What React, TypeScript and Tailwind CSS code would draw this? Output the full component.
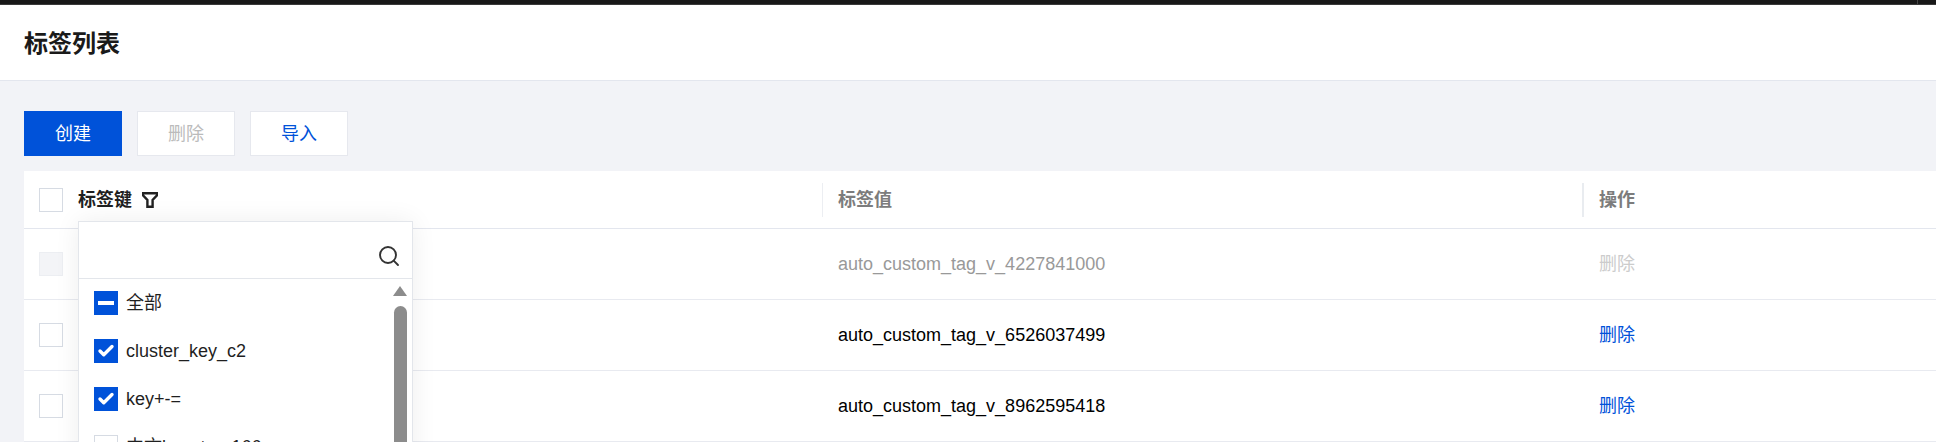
import { Check, Search } from 'lucide-react'

const font = { fontFamily: '"Liberation Sans", "Noto Sans CJK SC", sans-serif' }

const rows = [
  { value: 'auto_custom_tag_v_4227841000', disabled: true },
  { value: 'auto_custom_tag_v_6526037499', disabled: false },
  { value: 'auto_custom_tag_v_8962595418', disabled: false },
]

function FilterIcon() {
  return (
    <svg width="16" height="16" viewBox="0 0 16 16" fill="none" stroke="#222" strokeWidth="2.4">
      <path d="M1 1.2h14v2.2L10.6 8v6.8H5.4V8L1 3.4z" />
    </svg>
  )
}

function Box({ state }: { state?: 'all' | 'some' | 'disabled' }) {
  if (state === 'all') {
    return (
      <span className="flex h-6 w-6 shrink-0 items-center justify-center bg-[#0052d9]">
        <Check size={18} strokeWidth={4.5} className="text-white" />
      </span>
    )
  }
  if (state === 'some') {
    return (
      <span className="flex h-6 w-6 shrink-0 items-center justify-center bg-[#0052d9]">
        <span className="h-[4px] w-[16px] bg-white" />
      </span>
    )
  }
  if (state === 'disabled') {
    return <span className="block h-6 w-6 shrink-0 border border-[#eceef2] bg-[#f3f4f7]" />
  }
  return <span className="block h-6 w-6 shrink-0 border border-[#d6dbe3] bg-white" />
}

function FilterMenu() {
  return (
    <div className="absolute left-[54px] top-[50px] z-10 h-[400px] w-[335px] border border-[#e3e6eb] bg-white shadow-[0_0_24px_rgba(0,0,0,0.07)]">
      <div className="flex h-[57px] items-end justify-end border-b border-[#e3e6eb] pb-[10px] pr-[11px]">
        <Search size={24} strokeWidth={1.9} className="text-[#333]" />
      </div>
      <div className="relative">
        <div className="flex flex-col gap-[24px] pl-[15px] pt-[12px] text-[18px] text-[#1f1f1f]">
          <div className="flex h-6 items-center gap-2">
            <Box state="some" />
            <span>全部</span>
          </div>
          <div className="flex h-6 items-center gap-2">
            <Box state="all" />
            <span>cluster_key_c2</span>
          </div>
          <div className="flex h-6 items-center gap-2">
            <Box state="all" />
            <span>key+-=</span>
          </div>
          <div className="flex h-6 items-center gap-2">
            <Box />
            <span>中文key+tag-166</span>
          </div>
        </div>
        <div className="absolute right-[5px] top-[7px] h-0 w-0 border-x-[7px] border-b-[10px] border-x-transparent border-b-[#8c8c8c]" />
        <div className="absolute right-[5px] top-[27px] h-[300px] w-[13px] rounded-t-[7px] bg-[#8c8c8c]" />
      </div>
    </div>
  )
}

export default function App() {
  return (
    <div className="h-[442px] overflow-hidden bg-[#f2f3f7] text-[18px]" style={font}>
      <div className="flex h-[5px] border-b border-[#3a3a3a] bg-[#181818]">
        <div className="w-[1918px] border-r border-[#444]" />
      </div>
      <div className="flex h-[76px] items-center border-b border-[#e3e6ee] bg-white pl-6 pt-[2px]">
        <h1 className="text-[24px] font-bold text-[#1a1a1a]">标签列表</h1>
      </div>
      <div className="pl-6 pt-[30px]">
        <div className="flex gap-[15px]">
          <button className="h-[45px] w-[98px] bg-[#0052d9] pt-[2px] text-[18px] text-white">创建</button>
          <button className="h-[45px] w-[98px] border border-[#e6e8ee] bg-white pt-[2px] text-[18px] text-[#bbb]">删除</button>
          <button className="h-[45px] w-[98px] border border-[#e6e8ee] bg-white pt-[2px] text-[18px] text-[#0052d9]">导入</button>
        </div>
        <div className="relative mt-[15px] bg-white">
          <div className="flex h-[58px] items-center border-b border-[#e3e6ee] text-[18px] font-bold">
            <div className="flex w-[798px] items-center pl-[15px]">
              <Box />
              <span className="ml-[15px] pt-[2px] text-[#1f1f1f]">标签键</span>
              <span className="ml-[10px]"><FilterIcon /></span>
            </div>
            <div className="h-[34px] w-px bg-[#eceef2]" />
            <div className="w-[759px] pl-[15px] pt-[2px] text-[#7c7c7c]">标签值</div>
            <div className="h-[34px] w-[2px] bg-[#e9ecf0]" />
            <div className="pl-[15px] pt-[2px] text-[#7c7c7c]">操作</div>
          </div>
          {rows.map((row) => (
            <div key={row.value} className="flex h-[71px] items-center border-b border-[#e8eaf0]">
              <div className="w-[799px] pl-[15px]">
                <Box state={row.disabled ? 'disabled' : undefined} />
              </div>
              <div className={`w-[760px] pl-[15px] ${row.disabled ? 'text-[#999]' : 'text-black'}`}>{row.value}</div>
              <div className={`pl-[16px] ${row.disabled ? 'text-[#ccc]' : 'text-[#0052d9]'}`}>删除</div>
            </div>
          ))}
          <FilterMenu />
        </div>
      </div>
    </div>
  )
}
